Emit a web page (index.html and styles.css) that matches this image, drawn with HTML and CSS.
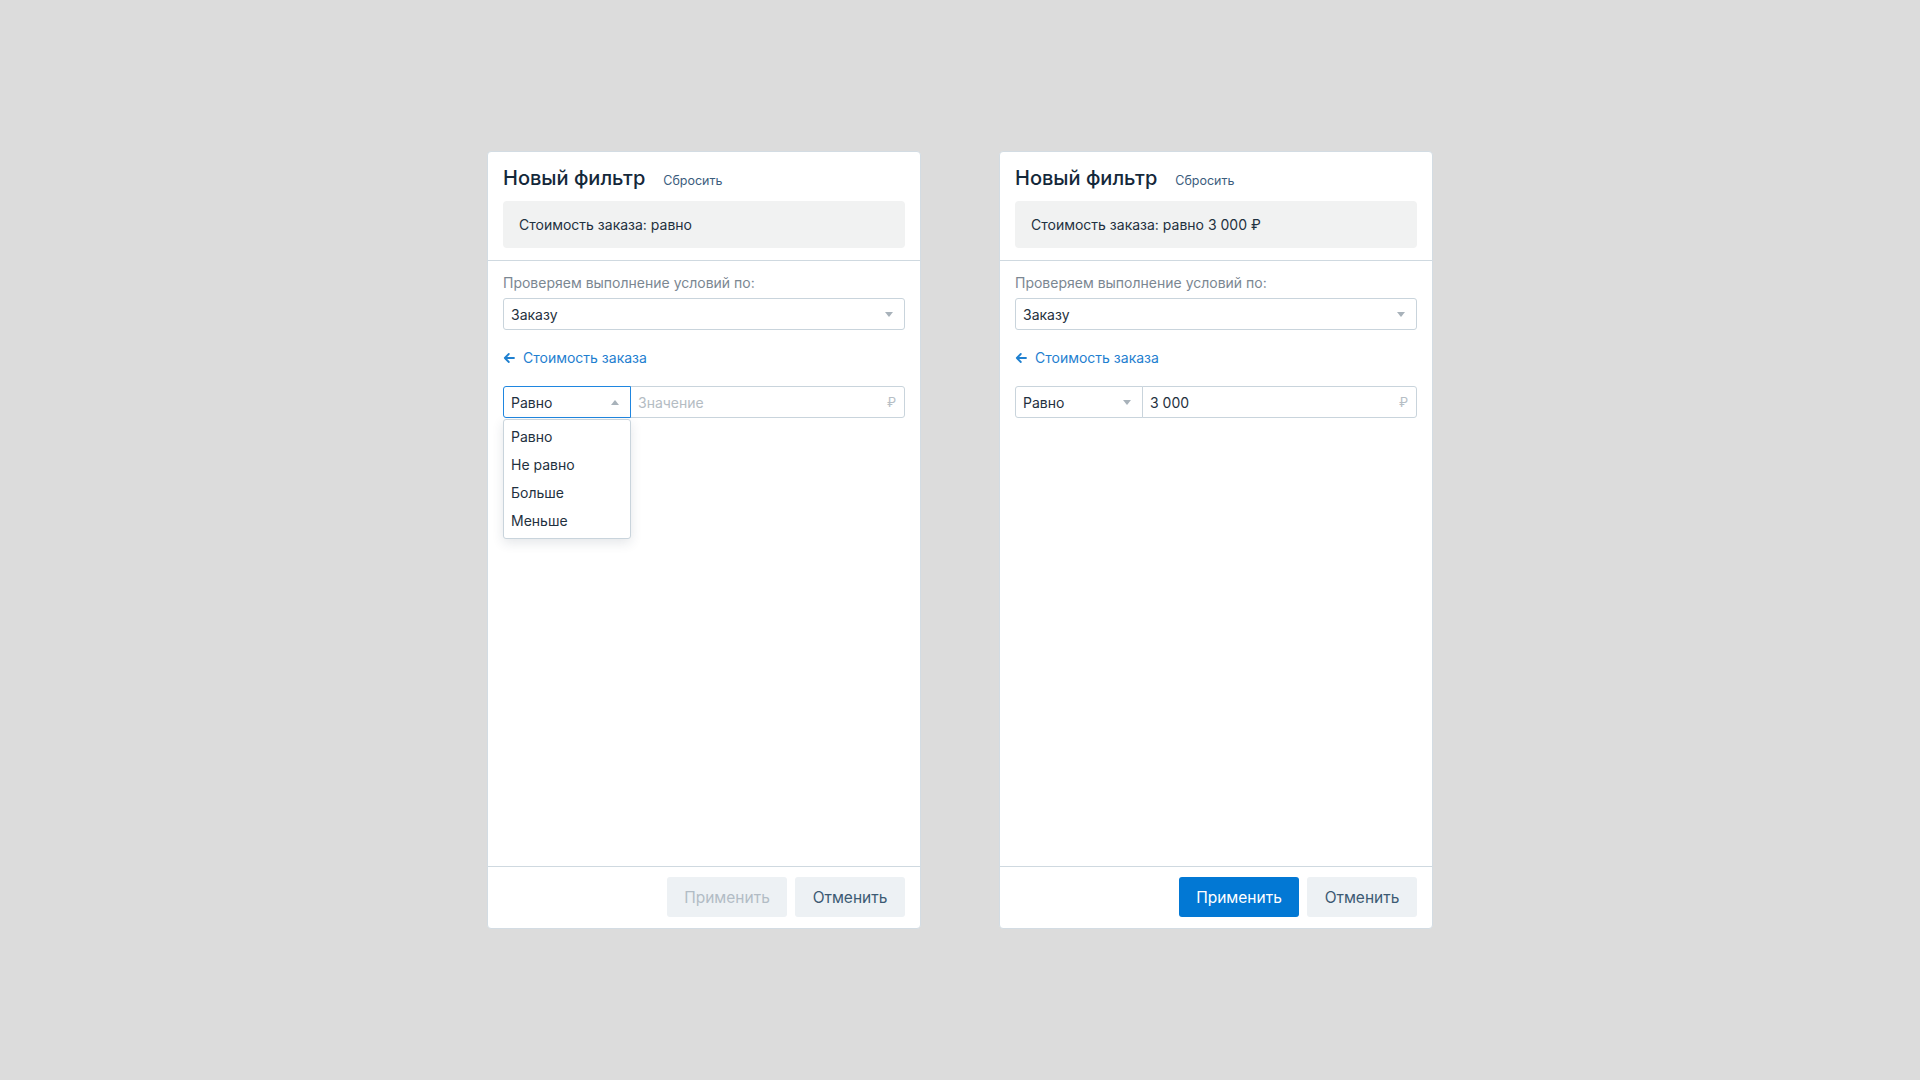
FILE: index.html
```html
<!DOCTYPE html>
<html lang="ru">
<head>
  <meta charset="UTF-8" />
  <meta name="viewport" content="width=device-width, initial-scale=1.0"/>
  <title>Новый фильтр</title>

  <link rel="stylesheet" href="styles.css">
</head>
<body>

  <div class="board">

    <!-- filter with the operator list open -->
    <div class="panel">
      <div class="panel-head">
        <div class="title-row">
          <span class="title">Новый фильтр</span>
          <a class="reset">Сбросить</a>
        </div>
        <div class="summary">Стоимость заказа: равно</div>
      </div>

      <div class="panel-body">
        <div class="label">Проверяем выполнение условий по:</div>
        <div class="select wide">
          <span>Заказу</span>
          <i class="caret"></i>
        </div>

        <a class="back">
          <svg width="12" height="12" viewBox="0 0 12 12"><path d="M11 6H1.8M5.8 2L1.8 6l4 4" fill="none" stroke="#1f80d0" stroke-width="1.8" stroke-linecap="round" stroke-linejoin="round"/></svg>
          Стоимость заказа
        </a>

        <div class="cond">
          <div class="select op focus">
            <span>Равно</span>
            <i class="caret up"></i>
          </div>
          <div class="value">
            <span class="placeholder">Значение</span>
            <span class="rub">₽</span>
          </div>

          <ul class="menu">
            <li>Равно</li>
            <li>Не равно</li>
            <li>Больше</li>
            <li>Меньше</li>
          </ul>
        </div>
      </div>

      <div class="panel-foot">
        <button class="btn" disabled>Применить</button>
        <button class="btn">Отменить</button>
      </div>
    </div>

    <!-- filter with a value filled in -->
    <div class="panel">
      <div class="panel-head">
        <div class="title-row">
          <span class="title">Новый фильтр</span>
          <a class="reset">Сбросить</a>
        </div>
        <div class="summary">Стоимость заказа: равно 3 000 ₽</div>
      </div>

      <div class="panel-body">
        <div class="label">Проверяем выполнение условий по:</div>
        <div class="select wide">
          <span>Заказу</span>
          <i class="caret"></i>
        </div>

        <a class="back">
          <svg width="12" height="12" viewBox="0 0 12 12"><path d="M11 6H1.8M5.8 2L1.8 6l4 4" fill="none" stroke="#1f80d0" stroke-width="1.8" stroke-linecap="round" stroke-linejoin="round"/></svg>
          Стоимость заказа
        </a>

        <div class="cond">
          <div class="select op">
            <span>Равно</span>
            <i class="caret"></i>
          </div>
          <div class="value">
            <span>3 000</span>
            <span class="rub">₽</span>
          </div>
        </div>
      </div>

      <div class="panel-foot">
        <button class="btn primary">Применить</button>
        <button class="btn">Отменить</button>
      </div>
    </div>

  </div>

</body>
</html>
```

FILE: styles.css
```css
body {
  margin: 0;
  background-color: #dcdcdc;
  font-family: 'Inter', 'Noto Sans', sans-serif;
  color: #1f3140;
  height: 100vh;
  display: flex;
  align-items: center;
  justify-content: center;
}

.board {
  display: flex;
  gap: 78px;
}

.panel {
  width: 434px;
  height: 778px;
  box-sizing: border-box;
  background: #fff;
  border: 1px solid #d3dce3;
  border-radius: 4px;
  display: flex;
  flex-direction: column;
}

/* header */

.panel-head {
  padding: 14px 15px 12px;
  border-bottom: 1px solid #cfd9e0;
}

.title-row {
  display: flex;
  align-items: baseline;
  gap: 18px;
  height: 24px;
  margin-bottom: 11px;
}

.title {
  font-size: 20px;
  font-weight: 500;
  line-height: 24px;
  color: #14283a;
}

.reset {
  font-size: 12.5px;
  color: #3b5d7d;
  cursor: pointer;
}

.summary {
  background: #f1f2f2;
  border-radius: 4px;
  height: 47px;
  padding: 0 16px;
  display: flex;
  align-items: center;
  font-size: 14px;
}

/* body */

.panel-body {
  flex: 1;
  padding: 12px 15px 0;
}

.label {
  font-size: 14px;
  line-height: 20px;
  color: #7b8792;
  margin-bottom: 5px;
}

.select, .value {
  height: 32px;
  box-sizing: border-box;
  border: 1px solid #c9d4dc;
  display: flex;
  align-items: center;
  padding: 0 7px;
  font-size: 14px;
  background: #fff;
}

.select {
  justify-content: space-between;
  border-radius: 3px;
}

.select.wide {
  margin-bottom: 18px;
}

.caret {
  width: 0;
  height: 0;
  border-left: 4.5px solid transparent;
  border-right: 4.5px solid transparent;
  border-top: 5px solid #a8b2ba;
  margin-right: 4px;
}

.caret.up {
  border-top: none;
  border-bottom: 5px solid #a8b2ba;
}

.back {
  display: flex;
  align-items: center;
  gap: 8px;
  font-size: 14px;
  line-height: 20px;
  color: #1f80d0;
  cursor: pointer;
  margin-bottom: 18px;
}

.cond {
  display: flex;
  position: relative;
}

.select.op {
  width: 128px;
  border-radius: 3px 0 0 3px;
  position: relative;
  z-index: 1;
}

.select.focus {
  border-color: #1f86e0;
}

.value {
  flex: 1;
  margin-left: -1px;
  border-radius: 0 3px 3px 0;
  justify-content: space-between;
}

.placeholder {
  color: #b4bcc3;
}

.rub {
  color: #b6bec5;
  font-size: 13px;
  margin-right: 1px;
}

/* open operator list */

.menu {
  position: absolute;
  top: 33px;
  left: 0;
  width: 128px;
  box-sizing: border-box;
  margin: 0;
  padding: 3px 0;
  list-style: none;
  background: #fff;
  border: 1px solid #c9d4dc;
  border-radius: 3px;
  box-shadow: 0 4px 12px rgba(30, 50, 70, 0.12);
  z-index: 2;
}

.menu li {
  height: 28px;
  line-height: 28px;
  padding: 0 7px;
  font-size: 14px;
}

/* footer */

.panel-foot {
  border-top: 1px solid #cfd9e0;
  padding: 10px 15px 11px;
  display: flex;
  justify-content: flex-end;
  gap: 8px;
}

.btn {
  height: 40px;
  border: none;
  border-radius: 3px;
  background: #edf1f4;
  color: #3c5a73;
  font-family: inherit;
  font-size: 15.5px;
  padding: 0 16px;
  min-width: 110px;
  cursor: pointer;
}

.btn:disabled {
  width: 120px;
  color: #b2bcc5;
  cursor: default;
}

.btn.primary {
  width: 120px;
  background: #0278d4;
  color: #fff;
}
```
